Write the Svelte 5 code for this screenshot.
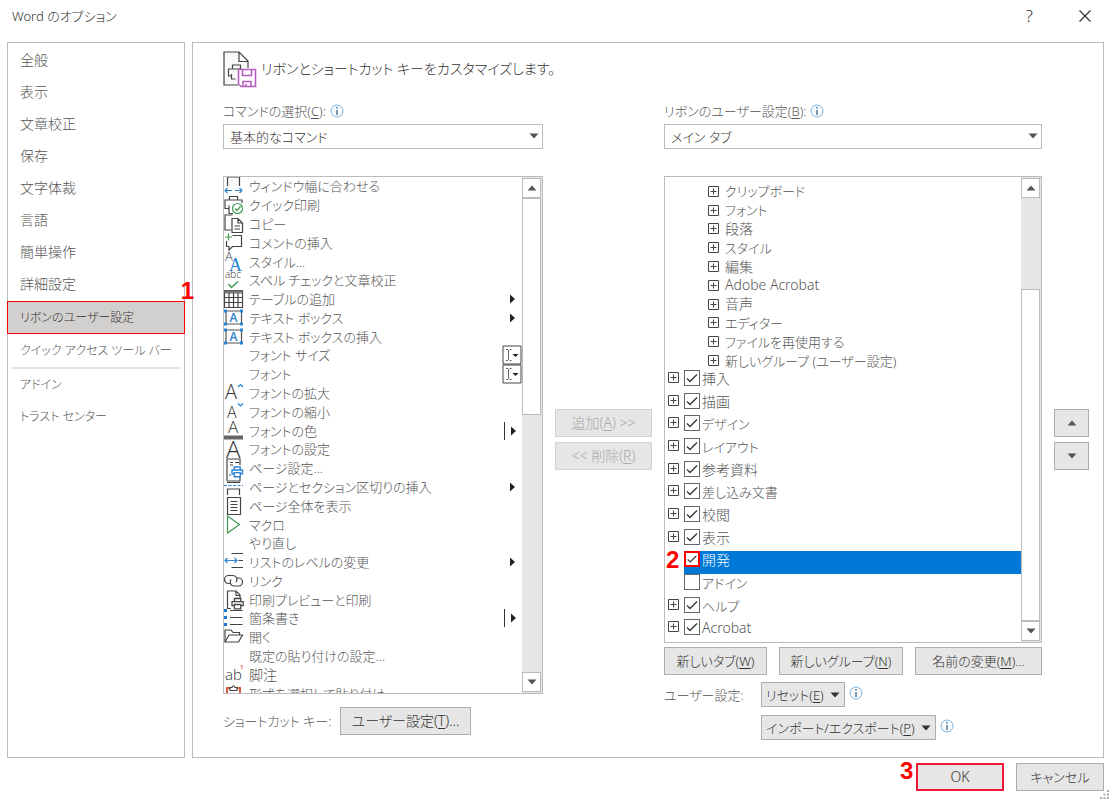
<script lang="ts">
  type Command = { label: string; icon?: string; more?: 'menu' | 'split' | 'combo' };
  type Tab = { label: string; checked: boolean; leaf?: boolean };

  const categories = ['全般', '表示', '文章校正', '保存', '文字体裁', '言語', '簡単操作', '詳細設定'];
  const ribbonCategories = ['リボンのユーザー設定', 'クイック アクセス ツール バー'];
  const addinCategories = ['アドイン', 'トラスト センター'];

  const commands: Command[] = [
    { label: 'ウィンドウ幅に合わせる', icon: 'fit' },
    { label: 'クイック印刷', icon: 'quickprint' },
    { label: 'コピー', icon: 'copy' },
    { label: 'コメントの挿入', icon: 'comment' },
    { label: 'スタイル...', icon: 'styles' },
    { label: 'スペル チェックと文章校正', icon: 'spell' },
    { label: 'テーブルの追加', icon: 'table', more: 'menu' },
    { label: 'テキスト ボックス', icon: 'textbox', more: 'menu' },
    { label: 'テキスト ボックスの挿入', icon: 'textbox' },
    { label: 'フォント サイズ', more: 'combo' },
    { label: 'フォント', more: 'combo' },
    { label: 'フォントの拡大', icon: 'grow' },
    { label: 'フォントの縮小', icon: 'shrink' },
    { label: 'フォントの色', icon: 'color', more: 'split' },
    { label: 'フォントの設定', icon: 'font' },
    { label: 'ページ設定...', icon: 'pagesetup' },
    { label: 'ページとセクション区切りの挿入', icon: 'break', more: 'menu' },
    { label: 'ページ全体を表示', icon: 'page' },
    { label: 'マクロ', icon: 'macro' },
    { label: 'やり直し' },
    { label: 'リストのレベルの変更', icon: 'level', more: 'menu' },
    { label: 'リンク', icon: 'link' },
    { label: '印刷プレビューと印刷', icon: 'preview' },
    { label: '箇条書き', icon: 'bullets', more: 'split' },
    { label: '開く', icon: 'open' },
    { label: '既定の貼り付けの設定...' },
    { label: '脚注', icon: 'footnote' },
    { label: '形式を選択して貼り付け', icon: 'paste' },
  ];

  const groups = [
    'クリップボード', 'フォント', '段落', 'スタイル', '編集', 'Adobe Acrobat',
    '音声', 'エディター', 'ファイルを再使用する', '新しいグループ (ユーザー設定)',
  ];

  let tabs = $state<Tab[]>([
    { label: '挿入', checked: true },
    { label: '描画', checked: true },
    { label: 'デザイン', checked: true },
    { label: 'レイアウト', checked: true },
    { label: '参考資料', checked: true },
    { label: '差し込み文書', checked: true },
    { label: '校閲', checked: true },
    { label: '表示', checked: true },
    { label: '開発', checked: true, leaf: true },
    { label: 'アドイン', checked: false, leaf: true },
    { label: 'ヘルプ', checked: true },
    { label: 'Acrobat', checked: true },
  ]);

  let category = $state('リボンのユーザー設定');
  let selectedTab = $state('開発');

  const hasKana = (s: string) => /[\u3041-\u30ff]/.test(s);
</script>

{#snippet info()}
  <svg class="info" viewBox="0 0 14 14" aria-hidden="true">
    <circle cx="7" cy="7" r="6" fill="#f7fbfe" stroke="#7fb0d8" />
    <path d="M7 3v1.6M7 6v5" stroke="#35658f" stroke-width="1.3" />
  </svg>
{/snippet}

{#snippet arrow(dir: 'up' | 'down')}
  <svg class="arrow" viewBox="0 0 10 6" aria-hidden="true">
    <path d={dir === 'up' ? 'M0.5 5.5L5 0.5L9.5 5.5z' : 'M0.5 0.5L5 5.5L9.5 0.5z'} />
  </svg>
{/snippet}

{#snippet expander()}
  <button type="button" class="expander" aria-label="展開">
    <svg viewBox="0 0 11 11" fill="none" stroke="#444">
      <path d="M.5.5h10v10h-10z" /><path d="M2.5 5.5h6M5.5 2.5v6" />
    </svg>
  </button>
{/snippet}

{#snippet printer()}
  <path d="M3 4V0h8v4M3 9H0V4h14v5h-3M3 7.5h8V13H3z" />
{/snippet}

{#snippet navItem(name: string)}
  <button
    type="button"
    class="nav-item"
    class:small={hasKana(name)}
    class:active={category === name}
    onclick={() => (category = name)}>{name}</button>
{/snippet}

{#snippet icon(name: string)}
  <svg class="icon" viewBox="0 0 20 20" fill="none" stroke="#444" stroke-width="1.2" aria-hidden="true">
    {#if name === 'fit'}
      <path d="M3.5 9V0h12v9" fill="#f8f8f8" />
      <path d="M1 13.5h7M11 13.5h7M3.5 11L1 13.5L3.5 16M15.5 11L18 13.5L15.5 16" stroke="#2b84d2" />
    {:else if name === 'quickprint'}
      <path d="M5.5 4V.5h8V4M5.5 12.5H1V4h17v3M5 9.5v8h4" />
      <circle cx="13.5" cy="12.5" r="5" fill="#fff" stroke="#3f9a56" />
      <path d="M11 12.5l2 2l3.5-4" stroke="#3f9a56" />
    {:else if name === 'copy'}
      <path d="M7 15H1V0h7.5" />
      <path d="M8 3.5h6l4.5 4.5v9.5H8zM14 3.5V8h4.5M10.5 11H16M10.5 14H16" />
    {:else if name === 'comment'}
      <path d="M8.5 1.5h9v11h-9L5 16v-3.5H2.5V7" />
      <path d="M4.5-.5v7M1 3h7" stroke="#3f9a56" />
    {:else if name === 'styles'}
      <text x="1" y="8" font-size="13" class="glyph">A</text>
      <text x="5" y="18" font-size="18" class="glyph serif blue">A</text>
    {:else if name === 'spell'}
      <text x="1" y="7" font-size="10" class="glyph">abc</text>
      <path d="M4.5 13l3 3.5l6.5-6" stroke="#3f9a56" stroke-width="1.5" />
    {:else if name === 'table'}
      <path d="M.5.5h18v17H.5z" />
      <path d="M.5 2h18" stroke-width="3" stroke="#777" />
      <path d="M.5 7.5h18M.5 12.5h18M5 3v14.5M9.5 3v14.5M14 3v14.5" />
    {:else if name === 'textbox'}
      <path d="M2 2h15.5v13H2z" stroke="#555" />
      <path d="M0 .5h3v3H0zM16 .5h3v3h-3zM0 13.5h3v3H0zM16 13.5h3v3h-3z" fill="#2b84d2" stroke="none" />
      <text x="5.5" y="12.5" font-size="12" class="glyph blue bold">A</text>
    {:else if name === 'grow'}
      <text x="1" y="14.5" font-size="20" class="glyph">A</text>
      <path d="M14 3L16.5.5L19 3" stroke="#2b84d2" />
    {:else if name === 'shrink'}
      <text x="3" y="14.5" font-size="16" class="glyph">A</text>
      <path d="M14 .5L16.5 3L19 .5" stroke="#2b84d2" />
    {:else if name === 'color'}
      <text x="4" y="11" font-size="17" class="glyph">A</text>
      <path d="M0 15.5h19" stroke-width="4" stroke="#666" />
    {:else if name === 'font'}
      <text x="2" y="17.5" font-size="24" class="glyph">A</text>
    {:else if name === 'pagesetup'}
      <path d="M3 22V0h13v6M3 22h13v-4" />
      <path d="M6 3.5h3M6 6h3M11 3.5h4M5 16h2" />
      <g transform="translate(8 8) scale(.75)" stroke="#2b84d2" stroke-width="1.8">{@render printer()}</g>
    {:else if name === 'break'}
      <path d="M0 7.5h19" stroke="#2b84d2" stroke-dasharray="3 1.5" />
      <path d="M3 4.5h13M3.5 17v-6h12v6" />
    {:else if name === 'page'}
      <path d="M3.5.5h13v17h-13z" />
      <path d="M6.5 4.5h7M6.5 7.5h7M6.5 10.5h7M6.5 13.5h7" />
    {:else if name === 'macro'}
      <path d="M3.5 0l12 8.5l-12 8.5z" stroke="#3f9a56" />
    {:else if name === 'level'}
      <path d="M7.5.5H19M14.5 7.5H19M7.5 14.5H19" />
      <path d="M1 7.5h12M3.5 5L1 7.5L3.5 10M10.5 5L13 7.5L10.5 10" stroke="#2b84d2" />
    {:else if name === 'link'}
      <path d="M7 11.5H4.5a4 4 0 0 1 0-8H9a4 4 0 0 1 3 6.5" />
      <path d="M13 6h1.5a4 4 0 0 1 0 8H10a4 4 0 0 1-3-6.5" />
    {:else if name === 'preview'}
      <path d="M7 17.5H3.5V0H12l4 4v3M12 0v4.5h4" />
      <g transform="translate(8 7.5) scale(.8)" stroke-width="1.6">{@render printer()}</g>
    {:else if name === 'bullets'}
      <path d="M0 0h3v3H0zM0 7h3v3H0zM0 14h3v3H0z" fill="#1976d2" stroke="none" />
      <path d="M6 1.5h12.5M6 8.5h12.5M6 15.5h12.5" />
    {:else if name === 'open'}
      <path d="M1 14V2h6l2 2.5h6.5V7M1 14l4-7h13.5l-4 7z" />
    {:else if name === 'footnote'}
      <text x="1" y="13.5" font-size="15" class="glyph">ab</text>
      <text x="16" y="3" font-size="6" class="glyph red">1</text>
    {:else if name === 'paste'}
      <path d="M3 12V3h13v9" stroke="#d9563c" stroke-width="2" />
      <path d="M6 5.5V2.5h2q1.5-3.5 3 0h2v3z" fill="#fff" />
    {/if}
  </svg>
{/snippet}

<div class="dialog">
  <header class="titlebar">
    <h1>Word のオプション</h1>
    <button type="button" class="plain" aria-label="ヘルプ">?</button>
    <button type="button" class="plain" aria-label="閉じる">
      <svg class="close" viewBox="0 0 12 12"><path d="M.5.5l11 11M11.5.5l-11 11" stroke="#333" stroke-width="1.2" /></svg>
    </button>
  </header>

  <div class="body">
    <nav class="nav">
      {#each categories as name}{@render navItem(name)}{/each}
      <div class="picked">
        {@render navItem(ribbonCategories[0])}
        <span class="step step-one">1</span>
      </div>
      {@render navItem(ribbonCategories[1])}
      <hr />
      {#each addinCategories as name}{@render navItem(name)}{/each}
    </nav>

    <main class="panel">
      <div class="headline">
        <svg class="headline-icon" viewBox="0 0 34 38" fill="none" stroke="#444" stroke-width="1.2" aria-hidden="true">
          <path d="M15 34H1V1h15l9 9v7M16 1v9.5h9" fill="#fafafa" />
          <path d="M9.5 18v-4h8v4M9.5 18h-4v7h3M12 18H9.5M8.5 23v5h4M12 18h5" />
          <path d="M15.5 18.5h17v17H18L15.5 33z" fill="#fff" stroke="#b45fc0" stroke-width="1.6" />
          <path d="M19.5 18.5v6h9v-6M20 35.5v-5h8v5M23 35v-2" stroke="#b45fc0" stroke-width="1.6" />
        </svg>
        <h2>リボンとショートカット キーをカスタマイズします。</h2>
      </div>

      <div class="columns">
        <section class="col">
          <div class="caption">
            <label for="source">コマンドの選択(<u>C</u>):</label>{@render info()}
          </div>
          <div class="select">
            <select id="source"><option>基本的なコマンド</option></select>
            {@render arrow('down')}
          </div>

          <div class="listbox commands">
            <ul class="command-list">
              {#each commands as cmd}
                <li>
                  <span class="icon-slot">{#if cmd.icon}{@render icon(cmd.icon)}{/if}</span>
                  <span class="name" class:kana={hasKana(cmd.label)}>{cmd.label}</span>
                  {#if cmd.more === 'menu'}
                    <svg class="more" viewBox="0 0 20 18"><path d="M8 4.5l5 4.5l-5 4.5z" fill="#222" /></svg>
                  {:else if cmd.more === 'split'}
                    <svg class="more" viewBox="0 0 20 18">
                      <path d="M2.5 0v18" stroke="#333" />
                      <path d="M9 4.5l5 4.5l-5 4.5z" fill="#222" />
                    </svg>
                  {:else if cmd.more === 'combo'}
                    <svg class="more" viewBox="0 0 20 18" fill="none" stroke="#444">
                      <path d="M1 0h18v18H1z" />
                      <path d="M4 3.5h2M7.5 3.5h2M4 14.5h2M7.5 14.5h2M6.5 4v10" stroke="#666" />
                      <path d="M10.5 8h6l-3 3z" fill="#222" stroke="none" />
                    </svg>
                  {/if}
                </li>
              {/each}
            </ul>
            <div class="scrollbar">
              <button type="button" aria-label="上へスクロール">{@render arrow('up')}</button>
              <div class="thumb"></div>
              <div class="track"></div>
              <button type="button" aria-label="下へスクロール">{@render arrow('down')}</button>
            </div>
          </div>

          <div class="shortcut">
            <span class="kana">ショートカット キー:</span>
            <button type="button" class="btn">ユーザー設定(<u>T</u>)...</button>
          </div>
        </section>

        <div class="side">
          <button type="button" class="btn" disabled>追加(<u>A</u>) &gt;&gt;</button>
          <button type="button" class="btn" disabled>&lt;&lt; 削除(<u>R</u>)</button>
        </div>

        <section class="col">
          <div class="caption">
            <label for="target">リボンのユーザー設定(<u>B</u>):</label>{@render info()}
          </div>
          <div class="select">
            <select id="target"><option>メイン タブ</option></select>
            {@render arrow('down')}
          </div>

          <div class="listbox tree">
            <div class="tree-body">
              <ul class="group-list">
                {#each groups as name}
                  <li>{@render expander()}<span class:kana={hasKana(name)}>{name}</span></li>
                {/each}
              </ul>
              <ul class="tab-list">
                {#each tabs as tab}
                  <li class:selected={selectedTab === tab.label}>
                    <span class="twist">
                      {#if !tab.leaf}{@render expander()}{/if}
                      {#if tab.label === '開発'}<span class="step step-two">2</span>{/if}
                    </span>
                    <label>
                      <input type="checkbox" bind:checked={tab.checked} onfocus={() => (selectedTab = tab.label)} />
                      <span class:kana={hasKana(tab.label)}>{tab.label}</span>
                    </label>
                  </li>
                {/each}
              </ul>
            </div>
            <div class="scrollbar low">
              <button type="button" aria-label="上へスクロール">{@render arrow('up')}</button>
              <div class="track"></div>
              <div class="thumb"></div>
              <button type="button" aria-label="下へスクロール">{@render arrow('down')}</button>
            </div>
          </div>

          <div class="tab-actions">
            <button type="button" class="btn">新しいタブ(<u>W</u>)</button>
            <button type="button" class="btn">新しいグループ(<u>N</u>)</button>
            <button type="button" class="btn">名前の変更(<u>M</u>)...</button>
          </div>
          <div class="customize">
            <span>ユーザー設定:</span>
            <div class="drop">
              <button type="button" class="btn"><span>リセット(<u>E</u>)</span>{@render arrow('down')}</button>{@render info()}
            </div>
            <div class="drop">
              <button type="button" class="btn"><span>インポート/エクスポート(<u>P</u>)</span>{@render arrow('down')}</button>{@render info()}
            </div>
          </div>
        </section>

        <div class="side">
          <button type="button" class="btn" aria-label="上へ">{@render arrow('up')}</button>
          <button type="button" class="btn" aria-label="下へ">{@render arrow('down')}</button>
        </div>
      </div>
    </main>
  </div>

  <footer class="footer">
    <div class="confirm">
      <span class="step step-three">3</span>
      <button type="button" class="btn ok">OK</button>
    </div>
    <button type="button" class="btn kana">キャンセル</button>
    <svg class="grip" viewBox="0 0 10 10" fill="#aaa">
      <path d="M7 0h2v2H7zM7 3.5h2v2H7zM3.5 3.5h2v2h-2zM7 7h2v2H7zM3.5 7h2v2h-2zM0 7h2v2H0z" />
    </svg>
  </footer>
</div>

<style>
  :global(body) { margin: 0; background: #fff; }
  .dialog {
    position: relative;
    display: flex;
    flex-direction: column;
    min-height: 100vh;
    box-sizing: border-box;
    color: #555;
    font-family: 'Noto Sans', 'Noto Sans CJK JP', sans-serif;
    font-size: 14px;
    font-weight: 300;
    font-feature-settings: 'palt';
    line-height: 18px;
  }
  .dialog * { box-sizing: border-box; }
  button, select { font: inherit; font-feature-settings: inherit; color: inherit; margin: 0; }
  button { padding: 0; }
  ul { list-style: none; margin: 0; padding: 0; }
  u { text-underline-offset: 2px; }

  .titlebar { display: flex; align-items: center; height: 42px; padding: 0 14px 10px 12px; }
  h1 { flex: 1; margin: 0; font-size: 13px; font-weight: 300; color: #333; }
  .plain {
    display: flex;
    align-items: center;
    justify-content: center;
    width: 23px;
    margin-left: 32px;
    border: 0;
    background: none;
    color: #222;
    font-size: 16px;
  }
  .close { width: 12px; height: 12px; }

  .body { flex: 1; display: flex; gap: 7px; padding: 0 6px 0 7px; }
  .nav { width: 178px; border: 1px solid #bbb; padding-top: 1px; }
  .nav-item {
    display: block;
    width: 100%;
    height: 32px;
    padding-left: 12px;
    border: 0;
    background: none;
    text-align: left;
    white-space: nowrap;
  }
  .nav-item.small { font-size: 12px; }
  .picked { position: relative; margin: 1px -1px 1px; }
  .nav-item.active { height: 33px; border: 1px solid #f00; background: #d2d0ce; color: #333; }
  hr { height: 2px; margin: 0 3px; border: 0; background: #e3e3e3; }

  .step { position: absolute; color: #f00; font: bold 24px/24px 'Liberation Sans', sans-serif; }
  .step-one { right: -9px; top: -22px; }
  .step-two { left: -2px; top: -3px; }
  .step-three { left: -16px; top: -4px; }

  .panel { flex: 1; min-width: 0; border: 1px solid #bbb; padding: 8px 14px 0 30px; }
  .headline { display: flex; align-items: center; gap: 4px; height: 38px; margin-bottom: 12px; }
  .headline-icon { width: 34px; height: 38px; }
  h2 { margin: 0; padding-bottom: 2px; font-size: 14px; font-weight: 300; color: #333; }

  .columns { display: grid; grid-template-columns: minmax(0, 320fr) 97px minmax(0, 378fr) 35px; column-gap: 12px; }
  .caption { display: flex; align-items: center; gap: 4px; height: 23px; padding-bottom: 4px; font-size: 13px; }
  .info { flex: none; width: 14px; height: 14px; }
  .select { position: relative; height: 25px; margin-bottom: 27px; }
  select {
    appearance: none;
    width: 100%;
    height: 25px;
    padding: 0 24px 0 6px;
    border: 1px solid #bbb;
    border-radius: 0;
    background: #fffffd;
    color: #333;
    font-size: 13px;
  }
  .select .arrow { position: absolute; right: 4px; top: 9px; pointer-events: none; }
  .arrow { flex: none; width: 10px; height: 6px; fill: #555; }

  .listbox { display: flex; border: 1px solid #bbb; overflow: hidden; }
  .commands { height: 518px; }
  .tree { height: 467px; }
  .command-list { flex: 1; display: grid; grid-template-rows: repeat(28, 1fr); height: 526px; }
  .command-list li { display: flex; align-items: center; min-height: 0; white-space: nowrap; }
  .icon-slot { width: 25px; height: 18px; }
  .icon { display: block; width: 20px; height: 20px; overflow: visible; }
  .name { flex: 1; }
  .kana { font-size: 13px; }
  .more { width: 20px; height: 18px; overflow: visible; }
  .glyph { fill: #333; stroke: none; font-family: 'Open Sans', sans-serif; font-weight: 300; }
  .glyph.serif { font-family: 'Liberation Serif', serif; }
  .glyph.bold { font-weight: 600; }
  .glyph.blue { fill: #2b84d2; }
  .glyph.red { fill: #e33; font-weight: 600; }

  .scrollbar { display: flex; flex-direction: column; width: 20px; padding: 1px 1px 1px 0; background: #e6e6e6; }
  .scrollbar button {
    display: flex;
    align-items: center;
    justify-content: center;
    height: 20px;
    border: 1px solid #bbb;
    background: #fff;
  }
  .scrollbar .thumb { flex: 217; border: 1px solid #bbb; background: #fff; }
  .scrollbar .track { flex: 259; }
  .low .thumb { flex: 332; }
  .low .track { flex: 92; }

  .shortcut { display: grid; grid-template-columns: 117px 131px; align-items: center; margin-top: 13px; white-space: nowrap; }
  .btn {
    display: flex;
    align-items: center;
    justify-content: center;
    height: 28px;
    border: 1px solid #adadad;
    background: #e6e6e6;
    color: #333;
    white-space: nowrap;
  }
  .btn:disabled { border-color: #d2d2d2; color: #aaa; }

  .side { display: flex; flex-direction: column; gap: 5px; padding-top: 308px; }

  .tree-body { flex: 1; padding-top: 5px; }
  .group-list { display: grid; grid-template-rows: repeat(10, 1fr); height: 188px; padding-left: 43px; }
  .group-list li { display: flex; align-items: center; gap: 6px; min-height: 0; }
  .expander { width: 11px; height: 11px; border: 0; background: none; }
  .expander svg { display: block; width: 11px; height: 11px; }
  .tab-list { display: grid; grid-template-rows: repeat(12, 1fr); height: 272px; padding-left: 3px; }
  .tab-list li { display: flex; min-height: 0; }
  .twist { position: relative; flex: none; display: flex; align-items: flex-start; width: 16px; padding-top: 2px; }
  .tab-list label { flex: 1; display: flex; gap: 2px; align-items: flex-start; }
  .tab-list input {
    appearance: none;
    width: 16px;
    height: 16px;
    margin: 0;
    border: 1px solid #666;
    background: #fff;
  }
  .tab-list input:checked {
    background: #fff url("data:image/svg+xml,%3Csvg xmlns='http://www.w3.org/2000/svg' viewBox='0 0 14 14'%3E%3Cpath d='M2 7.5l3 3l7-7' fill='none' stroke='%23333' stroke-width='1.3'/%3E%3C/svg%3E");
  }
  .selected label { background: #0078d7; color: #fff; }
  .tab-list .selected input { border: 2px solid #f00; }

  .tab-actions { display: grid; grid-template-columns: 103fr 124fr 127fr; gap: 12px; margin-top: 4px; font-size: 13px; }
  .customize {
    display: grid;
    grid-template-columns: 97px 1fr;
    row-gap: 8px;
    margin-top: 7px;
    font-size: 13px;
    white-space: nowrap;
  }
  .customize > span { padding-top: 4px; }
  .drop { grid-column: 2; display: flex; gap: 4px; }
  .drop .btn { height: 25px; padding: 0 4px; gap: 6px; }
  .drop .arrow { fill: #333; }
  .drop .info { margin-top: 4px; }

  .footer { display: flex; justify-content: flex-end; gap: 12px; height: 42px; padding: 5px 6px 0 0; }
  .footer .btn { width: 88px; height: 28px; }
  .confirm { position: relative; }
  .footer .ok { border: 2px solid #f01838; }
  .grip { position: absolute; right: 0; bottom: 0; width: 10px; height: 10px; }
</style>
